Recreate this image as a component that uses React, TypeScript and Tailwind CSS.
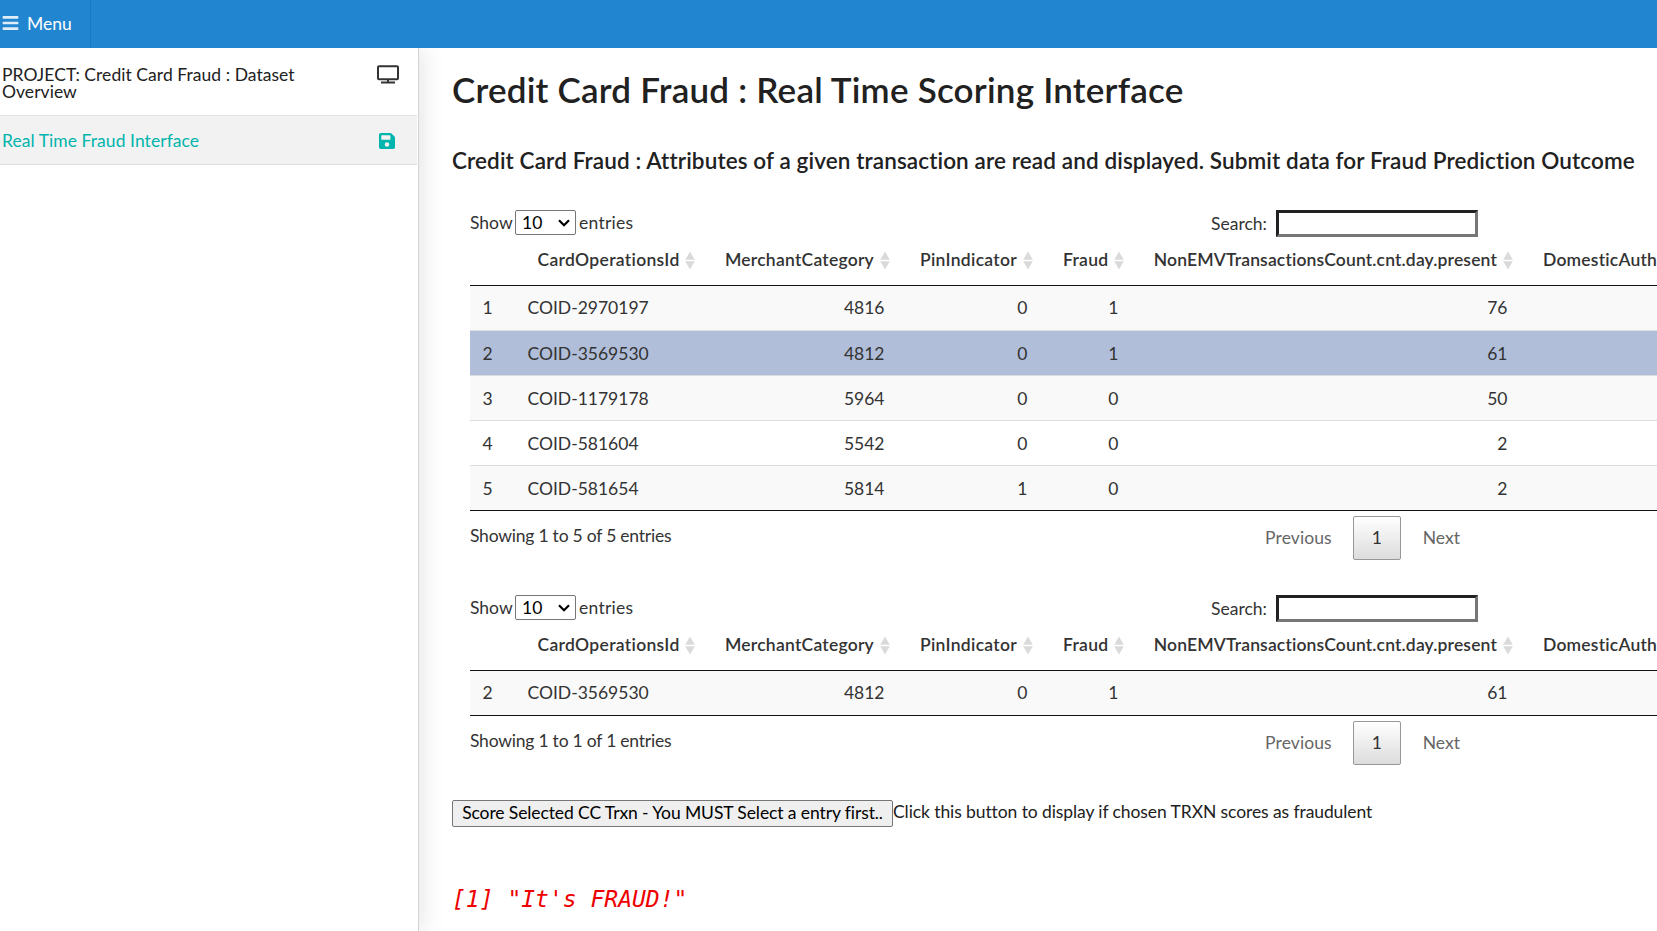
import { FaBars } from "react-icons/fa";

const sans = "font-['Lato',sans-serif]";

type Row = { id: number; values: string[]; state: string };

const columns = [
  { name: "CardOperationsId", align: "text-left", head: "pl-[22.5px] tracking-[0.32px]" },
  { name: "MerchantCategory", align: "text-right", head: "pr-[24px] tracking-[0.24px]" },
  { name: "PinIndicator", align: "text-right", head: "pr-[24px] tracking-[0.3px]" },
  { name: "Fraud", align: "text-right", head: "pr-[23.5px] tracking-[0.3px]" },
  { name: "NonEMVTransactionsCount.cnt.day.present", align: "text-right", head: "pr-[24px] tracking-[0.155px]" },
  { name: "DomesticAuth", align: "text-left", head: "pl-[22px] tracking-[0.2px]" },
];

const all: Row[] = [
  { id: 1, values: ["COID-2970197", "4816", "0", "1", "76", ""], state: "bg-[#f9f9f9]" },
  { id: 2, values: ["COID-3569530", "4812", "0", "1", "61", ""], state: "bg-[#b0bed9]" },
  { id: 3, values: ["COID-1179178", "5964", "0", "0", "50", ""], state: "bg-[#f9f9f9]" },
  { id: 4, values: ["COID-581604", "5542", "0", "0", "2", ""], state: "bg-white" },
  { id: 5, values: ["COID-581654", "5814", "1", "0", "2", ""], state: "bg-[#f9f9f9]" },
];

const chosen: Row[] = [{ ...all[1], state: "bg-[#f9f9f9]" }];

function SortIcon() {
  return (
    <svg className="absolute top-[3px] right-2 h-[19px] w-[10px]" viewBox="0 0 10 19" fill="#dadada">
      <path d="M5 0.5 9.8 8.8H0.2ZM5 18.5 9.8 10.2H0.2Z" />
    </svg>
  );
}

function DataTable({ rows, info }: { rows: Row[]; info: string }) {
  return (
    <section className="ml-[18px] text-[#333]">
      <div className="flex h-[39px] w-[1008px] items-start justify-between pt-px">
        <label className="flex h-[25px] items-center">
          <span className="w-[42px] pt-[2px]">Show</span>
          <span className="mx-[3px] flex h-[25px] w-[61px] items-center justify-between rounded-[2px] border border-[#767676] bg-white pt-px pr-[5px] pl-[6px] text-black">
            10
            <svg className="h-2 w-3" viewBox="0 0 12 8" fill="none" stroke="#000" strokeWidth="2.2">
              <path d="M1 1.2 6 6.2 11 1.2" />
            </svg>
          </span>
          <span className="pt-[2px] tracking-[0.25px]">entries</span>
        </label>
        <label className="flex h-[27px] items-center">
          <span className="pt-px">Search:</span>
          <input className="ml-[9px] h-[27px] w-[202px] border-[3px] border-t-[#212121] border-r-[#767676] border-b-[#767676] border-l-[#212121] bg-white" />
        </label>
      </div>
      <table className="w-[1360px] table-fixed border-separate border-spacing-0 border-b border-[#111]">
        <colgroup>
          <col className="w-[45px]" />
          <col className="w-[188px]" />
          <col className="w-[195px]" />
          <col className="w-[143px]" />
          <col className="w-[91px]" />
          <col className="w-[389px]" />
          <col />
        </colgroup>
        <thead>
          <tr className="h-[38px]">
            <th className="border-b border-[#111]" />
            {columns.map((c) => (
              <th
                key={c.name}
                className={`relative h-[38px] border-b border-[#111] py-0 align-top leading-[24px] font-semibold whitespace-nowrap ${c.align} ${c.head}`}
              >
                {c.name}
                <SortIcon />
              </th>
            ))}
          </tr>
        </thead>
        <tbody>
          {rows.map((r, i) => {
            const cell = i ? "h-[45px] border-t border-[#ddd] pt-[2px]" : "h-[44px] pt-px";
            return (
              <tr key={r.id} className={r.state}>
                <td className={`pl-[12.5px] ${cell}`}>{r.id}</td>
                {r.values.map((v, j) => (
                  <td key={j} className={`pr-[13.5px] pl-[12.5px] ${columns[j].align} ${cell}`}>
                    {v}
                  </td>
                ))}
              </tr>
            );
          })}
        </tbody>
      </table>
      <div className="flex w-[1008px] items-start justify-between">
        <span className="pt-[13px] leading-6 tracking-[-0.22px]">{info}</span>
        <div className="mt-[5px] flex h-11 items-center">
          <span className="tracking-[0.1px] text-[#666]">Previous</span>
          <span className="ml-[21px] flex h-11 w-12 items-center justify-center rounded-[2px] border border-[#979797] bg-linear-to-b from-white to-[#dcdcdc]">
            1
          </span>
          <span className="mr-[18px] ml-[22px] text-[#666]">Next</span>
        </div>
      </div>
    </section>
  );
}

export default function App() {
  return (
    <div className={`flex h-[931px] w-[1657px] flex-col overflow-hidden bg-white text-[17.5px] text-[#212121] [font-variant-ligatures:none] ${sans}`}>
      <header className="relative z-20 flex h-12 shrink-0 bg-[#2185d0] text-white">
        <div className="flex w-[91px] items-center border-r border-[#1e7ac0] pl-[2px]">
          <FaBars className="-mt-[3px] h-[18px] w-[17px] text-white/85" />
          <span className="ml-2">Menu</span>
        </div>
      </header>
      <div className="flex min-h-0 flex-1">
        <nav className="z-10 w-[419px] shrink-0 border-r border-[#d4d4d5] bg-white pr-px shadow-[0_0_25px_rgba(34,36,38,0.15)]">
          <div className="flex h-[68px] justify-between border-b border-[#e4e4e4] pt-[18px] pr-[17px] pl-[2px] leading-[17px]">
            <span className="w-[320px] tracking-[0.05px]">PROJECT: Credit Card Fraud : Dataset Overview</span>
            <svg className="-mt-px h-[19px] w-[24px]" viewBox="0 0 24 19" fill="none" stroke="#333" strokeWidth="2">
              <rect x="2" y="1.2" width="20" height="13" rx="1" />
              <path d="M12 14v3M5 17.5h14" />
            </svg>
          </div>
          <div className="flex h-[49px] items-center justify-between border-b border-[#dedede] bg-[#f2f2f2] pt-[2px] pr-[22px] pl-[2px] text-[#00b5ad]">
            <span className="tracking-[0.06px]">Real Time Fraud Interface</span>
            <svg className="-mt-px h-4 w-4" viewBox="0 0 448 448" fill="currentColor">
              <path d="M434 98 350 14A48 48 0 0 0 316 0H48A48 48 0 0 0 0 48V400a48 48 0 0 0 48 48H400a48 48 0 0 0 48-48V132a48 48 0 0 0-14-34ZM224 384a64 64 0 1 1 0-128 64 64 0 0 1 0 128ZM320 79V180a12 12 0 0 1-12 12H76a12 12 0 0 1-12-12V76a12 12 0 0 1 12-12H305l15 15Z" />
            </svg>
          </div>
        </nav>
        <main className="flex w-[1400px] shrink-0 flex-col pl-[33px]">
          <h1 className="mt-[19px] h-[45px] text-[35px] leading-[45px] font-semibold tracking-[0.22px] whitespace-nowrap">
            Credit Card Fraud : Real Time Scoring Interface
          </h1>
          <h2 className="mt-[34px] h-[30px] text-[22.5px] leading-[30px] font-semibold tracking-[0.11px] whitespace-nowrap">
            Credit Card Fraud : Attributes of a given transaction are read and displayed. Submit data for Fraud Prediction Outcome
          </h2>
          <div className="mt-[33px] h-[385px]">
            <DataTable rows={all} info="Showing 1 to 5 of 5 entries" />
          </div>
          <div className="h-[206px]">
            <DataTable rows={chosen} info="Showing 1 to 1 of 1 entries" />
          </div>
          <div className="flex items-center">
            <button className="h-[27px] w-[441px] rounded-[2px] border border-[#767676] bg-[#efefef] pb-[2px] leading-none tracking-[-0.1px] whitespace-nowrap text-black">
              Score Selected CC Trxn - You MUST Select a entry first..
            </button>
            <span className="-mt-[3px] tracking-[-0.09px] whitespace-nowrap">Click this button to display if chosen TRXN scores as fraudulent</span>
          </div>
          <pre className="mt-[57px] font-['DejaVu_Sans_Mono',monospace] text-[23px] leading-[30px] text-[#ee0000] italic">[1] "It's FRAUD!"</pre>
        </main>
      </div>
    </div>
  );
}
